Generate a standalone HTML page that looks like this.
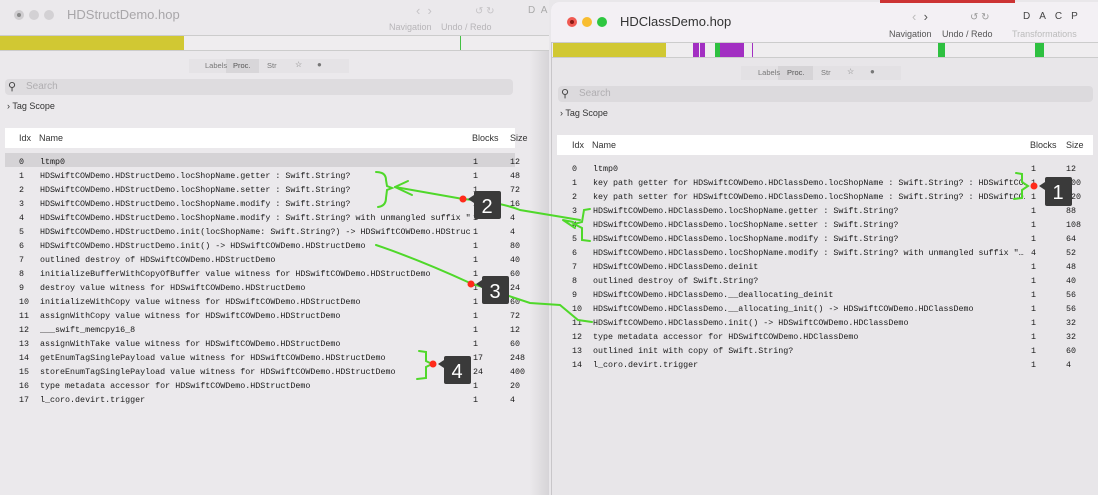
<!DOCTYPE html>
<html><head><meta charset="utf-8"><style>
*{margin:0;padding:0;box-sizing:border-box}
body{width:1098px;height:495px;overflow:hidden;background:#e9e7ea;font-family:"Liberation Sans",sans-serif;position:relative}
.a{position:absolute;white-space:nowrap}
.m{font-family:"Liberation Mono",monospace;font-size:8.35px;color:#1a1a1a}
.s{font-size:9px;color:#333}
</style></head><body>
<!-- left window -->
<div class="a" style="left:0;top:0;width:549px;height:495px;background:#ebe9ec"></div>
<div class="a" style="left:530px;top:50px;width:19px;height:445px;background:linear-gradient(90deg,#ebe9ec,#d6d4d7)"></div>
<div class="a" style="left:14px;top:10px;width:10px;height:10px;border-radius:50%;background:#cfcdd0"></div>
<div class="a" style="left:17px;top:13px;width:4px;height:4px;border-radius:50%;background:#888"></div>
<div class="a" style="left:29px;top:10px;width:10px;height:10px;border-radius:50%;background:#d3d1d4"></div>
<div class="a" style="left:44px;top:10px;width:10px;height:10px;border-radius:50%;background:#d3d1d4"></div>
<div class="a" style="left:67px;top:7px;font-size:13px;color:#a8a6a9">HDStructDemo.hop</div>
<div class="a" style="left:416px;top:3px;font-size:13px;color:#c5c3c6">‹ &nbsp;›</div>
<div class="a" style="left:475px;top:6px;font-size:10px;color:#c5c3c6">↺ ↻</div>
<div class="a" style="left:528px;top:5px;font-size:10px;color:#aaa">D &nbsp;A</div>
<div class="a" style="left:389px;top:22px;font-size:9px;color:#b7b5b8">Navigation</div>
<div class="a" style="left:441px;top:22px;font-size:9px;color:#b7b5b8">Undo / Redo</div>
<div class="a" style="left:0;top:35px;width:549px;height:16px;background:#efedef;border-top:1px solid #ccc;border-bottom:1px solid #ccc"></div>
<div class="a" style="left:0;top:36px;width:184px;height:14px;background:#d1c833"></div>
<div class="a" style="left:460px;top:36px;width:1px;height:14px;background:#43c043"></div>
<div class="a" style="left:189px;top:59px;width:160px;height:14px;background:#e5e3e6"></div>
<div class="a" style="left:226px;top:59px;width:33px;height:14px;background:#d8d6d9"></div>
<div class="a" style="left:205px;top:61px;font-size:7.5px;color:#777">Labels</div>
<div class="a" style="left:233px;top:61px;font-size:7.5px;color:#555">Proc.</div>
<div class="a" style="left:267px;top:61px;font-size:7.5px;color:#777">Str</div>
<div class="a" style="left:295px;top:60px;font-size:8px;color:#777">☆</div>
<div class="a" style="left:317px;top:60px;font-size:8px;color:#777">●</div>
<div class="a" style="left:5px;top:79px;width:508px;height:16px;background:#dedcdf;border-radius:4px"></div>
<div class="a" style="left:8px;top:80px;font-size:11px;color:#444">⚲</div>
<div class="a" style="left:26px;top:81px;font-size:10px;color:#b0aeb1">Search</div>
<div class="a" style="left:7px;top:101px;font-size:9px;color:#333">› Tag Scope</div>
<div class="a" style="left:5px;top:128px;width:510px;height:20px;background:#fff"></div>
<div class="a s" style="left:19px;top:133px">Idx</div>
<div class="a s" style="left:39px;top:133px">Name</div>
<div class="a s" style="left:472px;top:133px">Blocks</div>
<div class="a s" style="left:510px;top:133px">Size</div>
<div class="a" style="left:5px;top:153px;width:510px;height:14px;background:#d5d3d6"></div>

<div class="a m" style="left:19px;top:155px;line-height:14px">0<br>1<br>2<br>3<br>4<br>5<br>6<br>7<br>8<br>9<br>10<br>11<br>12<br>13<br>14<br>15<br>16<br>17</div>
<div class="a m" style="left:40px;top:155px;line-height:14px;width:430px;overflow:hidden">ltmp0<br>HDSwiftCOWDemo.HDStructDemo.locShopName.getter : Swift.String?<br>HDSwiftCOWDemo.HDStructDemo.locShopName.setter : Swift.String?<br>HDSwiftCOWDemo.HDStructDemo.locShopName.modify : Swift.String?<br>HDSwiftCOWDemo.HDStructDemo.locShopName.modify : Swift.String? with unmangled suffix "…<br>HDSwiftCOWDemo.HDStructDemo.init(locShopName: Swift.String?) -&gt; HDSwiftCOWDemo.HDStruc…<br>HDSwiftCOWDemo.HDStructDemo.init() -&gt; HDSwiftCOWDemo.HDStructDemo<br>outlined destroy of HDSwiftCOWDemo.HDStructDemo<br>initializeBufferWithCopyOfBuffer value witness for HDSwiftCOWDemo.HDStructDemo<br>destroy value witness for HDSwiftCOWDemo.HDStructDemo<br>initializeWithCopy value witness for HDSwiftCOWDemo.HDStructDemo<br>assignWithCopy value witness for HDSwiftCOWDemo.HDStructDemo<br>___swift_memcpy16_8<br>assignWithTake value witness for HDSwiftCOWDemo.HDStructDemo<br>getEnumTagSinglePayload value witness for HDSwiftCOWDemo.HDStructDemo<br>storeEnumTagSinglePayload value witness for HDSwiftCOWDemo.HDStructDemo<br>type metadata accessor for HDSwiftCOWDemo.HDStructDemo<br>l_coro.devirt.trigger</div>
<div class="a m" style="left:473px;top:155px;line-height:14px">1<br>1<br>1<br>1<br>1<br>1<br>1<br>1<br>1<br>1<br>1<br>1<br>1<br>1<br>17<br>24<br>1<br>1</div>
<div class="a m" style="left:510px;top:155px;line-height:14px">12<br>48<br>72<br>16<br>4<br>4<br>80<br>40<br>60<br>24<br>60<br>72<br>12<br>60<br>248<br>400<br>20<br>4</div>

<!-- right window -->
<div class="a" style="left:551px;top:2px;width:547px;height:493px;background:#e8e6e9;border-left:1px solid #c8c6c9;border-radius:8px 0 0 0"></div>
<div class="a" style="left:551px;top:2px;width:547px;height:40px;background:#f3f0f4;border-radius:8px 0 0 0"></div>
<div class="a" style="left:880px;top:0;width:135px;height:3px;background:#c33"></div>
<div class="a" style="left:567px;top:17px;width:10px;height:10px;border-radius:50%;background:#f05a52"></div>
<div class="a" style="left:570px;top:20px;width:4px;height:4px;border-radius:50%;background:#8a1a14"></div>
<div class="a" style="left:582px;top:17px;width:10px;height:10px;border-radius:50%;background:#f8bd30"></div>
<div class="a" style="left:597px;top:17px;width:10px;height:10px;border-radius:50%;background:#2ec740"></div>
<div class="a" style="left:620px;top:14px;font-size:13px;color:#333">HDClassDemo.hop</div>
<div class="a" style="left:912px;top:9px;font-size:13px;color:#555"><span style="color:#bbb">‹</span> &nbsp;›</div>
<div class="a" style="left:970px;top:12px;font-size:10px;color:#999">↺ ↻</div>
<div class="a" style="left:1023px;top:11px;font-size:10px;color:#444;letter-spacing:9px">DACP</div>
<div class="a" style="left:889px;top:29px;font-size:9px;color:#555">Navigation</div>
<div class="a" style="left:942px;top:29px;font-size:9px;color:#555">Undo / Redo</div>
<div class="a" style="left:1012px;top:29px;font-size:9px;color:#bbb">Transformations</div>
<div class="a" style="left:552px;top:42px;width:546px;height:16px;background:#efedef;border-top:1px solid #ccc;border-bottom:1px solid #ccc"></div>
<div class="a" style="left:553px;top:43px;width:113px;height:14px;background:#d1c833"></div>
<div class="a" style="left:693px;top:43px;width:6px;height:14px;background:#a22fc2"></div>
<div class="a" style="left:700px;top:43px;width:5px;height:14px;background:#a22fc2"></div>
<div class="a" style="left:715px;top:43px;width:5px;height:14px;background:#2ec040"></div>
<div class="a" style="left:720px;top:43px;width:24px;height:14px;background:#a22fc2"></div>
<div class="a" style="left:752px;top:43px;width:1px;height:14px;background:#a22fc2"></div>
<div class="a" style="left:938px;top:43px;width:7px;height:14px;background:#2ec040"></div>
<div class="a" style="left:1035px;top:43px;width:9px;height:14px;background:#2ec040"></div>
<div class="a" style="left:741px;top:66px;width:160px;height:14px;background:#e3e1e4"></div>
<div class="a" style="left:778px;top:66px;width:35px;height:14px;background:#d6d4d7"></div>
<div class="a" style="left:758px;top:68px;font-size:7.5px;color:#777">Labels</div>
<div class="a" style="left:787px;top:68px;font-size:7.5px;color:#555">Proc.</div>
<div class="a" style="left:821px;top:68px;font-size:7.5px;color:#777">Str</div>
<div class="a" style="left:847px;top:67px;font-size:8px;color:#777">☆</div>
<div class="a" style="left:870px;top:67px;font-size:8px;color:#777">●</div>
<div class="a" style="left:558px;top:86px;width:535px;height:16px;background:#dcdadd;border-radius:4px"></div>
<div class="a" style="left:561px;top:87px;font-size:11px;color:#444">⚲</div>
<div class="a" style="left:579px;top:88px;font-size:10px;color:#b0aeb1">Search</div>
<div class="a" style="left:560px;top:108px;font-size:9px;color:#333">› Tag Scope</div>
<div class="a" style="left:557px;top:135px;width:536px;height:20px;background:#fff"></div>
<div class="a s" style="left:572px;top:140px">Idx</div>
<div class="a s" style="left:592px;top:140px">Name</div>
<div class="a s" style="left:1030px;top:140px">Blocks</div>
<div class="a s" style="left:1066px;top:140px">Size</div>
<div class="a m" style="left:572px;top:162px;line-height:14px">0<br>1<br>2<br>3<br>4<br>5<br>6<br>7<br>8<br>9<br>10<br>11<br>12<br>13<br>14</div>
<div class="a m" style="left:593px;top:162px;line-height:14px;width:432px;overflow:hidden">ltmp0<br>key path getter for HDSwiftCOWDemo.HDClassDemo.locShopName : Swift.String? : HDSwiftCO…<br>key path setter for HDSwiftCOWDemo.HDClassDemo.locShopName : Swift.String? : HDSwiftCO…<br>HDSwiftCOWDemo.HDClassDemo.locShopName.getter : Swift.String?<br>HDSwiftCOWDemo.HDClassDemo.locShopName.setter : Swift.String?<br>HDSwiftCOWDemo.HDClassDemo.locShopName.modify : Swift.String?<br>HDSwiftCOWDemo.HDClassDemo.locShopName.modify : Swift.String? with unmangled suffix "…<br>HDSwiftCOWDemo.HDClassDemo.deinit<br>outlined destroy of Swift.String?<br>HDSwiftCOWDemo.HDClassDemo.__deallocating_deinit<br>HDSwiftCOWDemo.HDClassDemo.__allocating_init() -&gt; HDSwiftCOWDemo.HDClassDemo<br>HDSwiftCOWDemo.HDClassDemo.init() -&gt; HDSwiftCOWDemo.HDClassDemo<br>type metadata accessor for HDSwiftCOWDemo.HDClassDemo<br>outlined init with copy of Swift.String?<br>l_coro.devirt.trigger</div>
<div class="a m" style="left:1031px;top:162px;line-height:14px">1<br>1<br>1<br>1<br>1<br>1<br>4<br>1<br>1<br>1<br>1<br>1<br>1<br>1<br>1</div>
<div class="a m" style="left:1066px;top:162px;line-height:14px">12<br>100<br>120<br>88<br>108<br>64<br>52<br>48<br>40<br>56<br>56<br>32<br>32<br>60<br>4</div>

<!-- annotations -->
<svg class="a" style="left:0;top:0" width="1098" height="495" viewBox="0 0 1098 495">
<g fill="none" stroke="#4fd82a" stroke-width="2" stroke-linecap="round">
<path d="M376 172 Q386 172 386 180 L387 186 L392 188 L387 190 L386 198 Q386 206 378 207"/>
<path d="M395 187 L463 199 Q500 202 520 210 L580 220"/>
<path d="M395 187 L408 181 M395 187 L412 195"/>
<path d="M563 220 L573 222 M563 220 L575 228"/>
<path d="M590 209 L584 210 L582 222 L574 224 L582 228 L582 240 L590 241"/>
<path d="M376 245 Q420 260 470 283 L530 303 L560 305 L578 320 L592 322"/>
<path d="M419 351 L426 352 L426 361 L432 364 L426 367 L426 378 L417 379"/>
<path d="M1016 173 L1022 174 L1022 182 L1028 186 L1022 190 L1022 198 L1014 199"/>
</g>
<g fill="#ff2a1a"><circle cx="463" cy="199" r="3.5"/><circle cx="471" cy="284" r="3.5"/><circle cx="433" cy="364" r="3.5"/><circle cx="1034" cy="186" r="3.5"/></g>
<g fill="#3a3a3a"><rect x="474" y="191" width="27" height="28" rx="2"/><path d="M468 199 L474 195 L474 203Z"/>
<rect x="482" y="276" width="27" height="28" rx="2"/><path d="M476 284 L482 280 L482 288Z"/>
<rect x="444" y="356" width="27" height="28" rx="2"/><path d="M438 364 L444 360 L444 368Z"/>
<rect x="1045" y="177" width="27" height="29" rx="2"/><path d="M1039 186 L1045 182 L1045 190Z"/></g>
<g fill="#fff" font-family="Liberation Sans" font-size="20" text-anchor="middle"><text x="487" y="213">2</text><text x="495" y="298">3</text><text x="457" y="378">4</text><text x="1058" y="199">1</text></g>
</svg>
</body></html>
